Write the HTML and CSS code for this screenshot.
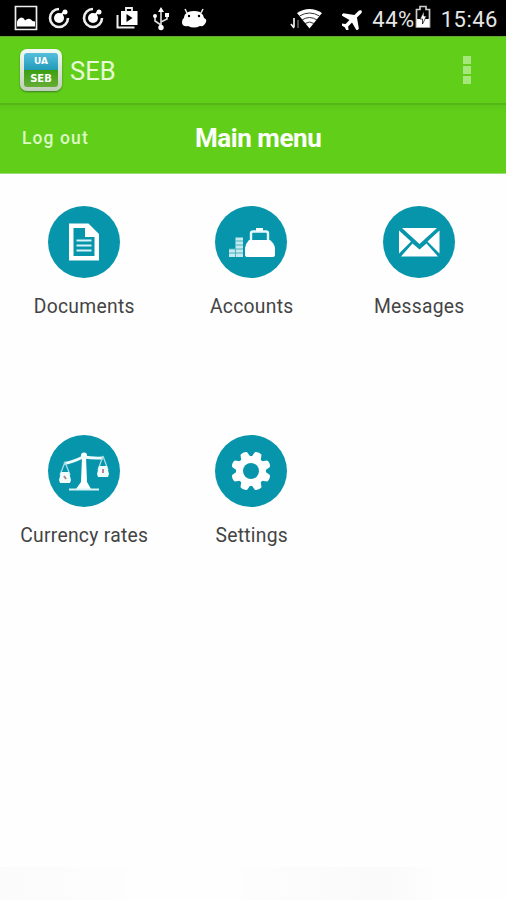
FILE: index.html
```html
<!DOCTYPE html>
<html lang="en">
<head>
<meta charset="utf-8">
<meta name="viewport" content="width=device-width">
<title>SEB</title>
<link rel="stylesheet" href="styles.css">
</head>
<body>
<header class="status">
  <div class="notifications">
    <svg width="24" height="26" viewBox="0 0 24 26"><path d="M1.500 1.500h21v23h-21z" fill="none" stroke="#eee" stroke-width="1.7"/><path d="M3 21.500v-5q1-3 4-4 3 0 4 3 3-3 6-1 1 2 4 2v5z" fill="#fff"/></svg>
    <svg class="swirl" width="22" height="22" viewBox="0 0 22 22"><path d="M11 2A9 9 0 1 0 20 11" fill="none" stroke="#eee" stroke-width="2.6"/><circle cx="11" cy="11" r="5" fill="#fff"/><path d="M12 9l5-5" stroke="#fff" stroke-width="2"/><circle cx="17" cy="5" r="2.5" fill="#fff"/></svg>
    <svg class="swirl second" width="22" height="22" viewBox="0 0 22 22"><path d="M11 2A9 9 0 1 0 20 11" fill="none" stroke="#eee" stroke-width="2.6"/><circle cx="11" cy="11" r="5" fill="#fff"/><path d="M12 9l5-5" stroke="#fff" stroke-width="2"/><circle cx="17" cy="5" r="2.5" fill="#fff"/></svg>
    <svg class="store" width="23" height="24" viewBox="0 0 23 24"><path d="M1.500 9v12.500h17" fill="none" stroke="#eee" stroke-width="2"/><path d="M5 5h16.500v14H5z" fill="#fff"/><path d="M10 6V2h6v4" fill="none" stroke="#eee" stroke-width="1.8"/><path d="M10.500 8v8l6-4z" fill="#000"/></svg>
    <svg class="usb" width="18" height="24" viewBox="0 0 18 24"><path d="M9 22V4M9 18l-6-4V8M9 15l6-3V8" fill="none" stroke="#ddd" stroke-width="1.6"/><path d="M9 0l3 5H6zM13 6h4v4h-4z" fill="#fff"/><circle cx="3" cy="9" r="2" fill="#fff"/><circle cx="9" cy="20.500" r="2.700" fill="#fff"/></svg>
    <svg class="droid" width="26" height="22" viewBox="0 0 26 22"><path d="M6 5L4 1M20 5l2-4" stroke="#eee" stroke-width="1.5"/><path d="M7 4q6-2 12 0 3 2 4 6 3 1 2 4-2 5-6 4-6 3-12 0-5 1-6-3 0-4 2-5 0-4 4-6z" fill="#fff"/><circle cx="8" cy="8" r="1.200"/><circle cx="18" cy="8" r="1.200"/></svg>
  </div>
  <div class="system">
    <svg class="wifi" width="34" height="22" viewBox="0 0 34 22"><path d="M7 5Q19.500-3 32 5L19.500 20.500z" fill="#fff"/><path d="M9.500 8q10-6 20 0M12 12q7.500-5 15 0M15 15.500q4.500-3 9 0" fill="none" stroke="#333" stroke-width="1"/><path d="M4 10v9M1 16l3 4" stroke="#eee" stroke-width="1.700" fill="none"/><path d="M8 12v8" stroke="#666" stroke-width="1.500"/></svg>
    <svg class="plane" width="22" height="22" viewBox="0 0 22 22"><g transform="translate(10.500 11.500) rotate(45)"><path d="M-1.800-11q1.800-3.500 3.600 0V-4.500L11 2v3L1.800 2.500V8L5 10.500V12.500L0 11l-5 1.500v-2L-1.800 8V2.500L-11 5V2l9.200-6.500z" fill="#fff"/></g></svg>
    <span class="percent">44%</span>
    <svg class="battery" width="16" height="24" viewBox="0 0 16 24"><path d="M1.500 22V4.500H5v-3h6v3h3.500V22z" fill="none" stroke="#ccc" stroke-width="1.700"/><path d="M2 14h12v8H2z" fill="#fff"/><path d="M9 6l-4 8h2.500v5l4-8H9z" fill="#fff" stroke="#000" stroke-width=".7"/></svg>
    <time>15:46</time>
  </div>
</header>
<div class="appbar">
  <div class="logo"><div class="logo-face"><span>UA</span><span>SEB</span></div></div>
  <span class="app-name">SEB</span>
  <div class="overflow"><i></i><i></i><i></i></div>
</div>
<nav class="titlebar">
  <a class="logout">Log out</a>
  <h1>Main menu</h1>
</nav>
<main class="menu">
  <a class="item">
    <svg class="disc" viewBox="0 0 72 72"><path fill-rule="evenodd" fill="#fff" d="M21 17.500h19.500L51 28v26.500H21zM25.500 22v28h21V31H37V22z"/><path d="M28.500 34.500h15M28.500 39.500h15M28.500 44.500h15" stroke="#d8f4f8" stroke-width="2.200"/></svg>
    <span>Documents</span>
  </a>
  <a class="item">
    <svg class="disc" viewBox="0 0 72 72"><path d="M36 36V27.500q0-2 2-2h13q2 0 2 2V36" fill="none" stroke="#e4f8fa" stroke-width="2.400"/><path d="M41 22h7v3h-7zM34 34h21q4 3 5 8v7q0 2-3 2H33q-3 0-3-2v-7q1-5 4-8z" fill="#fff"/><path d="M20.500 31.500h7.500v19.500h-7.500zM14 43h7v8h-7z" fill="#c4e9ee"/><path d="M20.500 35h7.500M20.500 39h7.500M14 43h14M14 47h14M20.500 43v8" stroke="#4cb0c0" stroke-width="1"/></svg>
    <span>Accounts</span>
  </a>
  <a class="item">
    <svg class="disc" viewBox="0 0 72 72"><path d="M19 22h35L36.500 38zM16 24.500l12 11-12 12zM56.500 24.500l-12 11 12 12zM29.500 37.500l7 6 7-6L55 50.500H18z" fill="#fff"/></svg>
    <span>Messages</span>
  </a>
  <a class="item">
    <svg class="disc" viewBox="0 0 72 72"><path d="M34 22h4l1 25 4 7H28l5-7z" fill="#fff"/><circle cx="36" cy="20.500" r="3" fill="#fff"/><path d="M16 28.500Q25 27 35 22q10 1.500 20 1" fill="none" stroke="#eefbfc" stroke-width="2.800"/><path d="M21 54.500h30" stroke="#d8f3f6" stroke-width="2"/><path d="M17 27l-5 13M17 27l5 13M55 21l-5 14M55 21l5 14" stroke="#a6dbe4" stroke-width="1.300"/><path d="M13 37h8l2 8-1 3H12l-1-3zM51 31h8l2 8-1 3H50l-1-3z" fill="#f0fbfc"/><path d="M16 41l2 3M55 34v4" stroke="#be858e" stroke-width="2"/></svg>
    <span>Currency rates</span>
  </a>
  <a class="item">
    <svg class="disc" viewBox="0 0 72 72"><defs><path id="tooth" d="M30.500 25L32.500 17q3.500-2 7 0l2 8z"/></defs><g fill="#fff"><circle cx="36" cy="36" r="15"/><use href="#tooth" transform="rotate(22.5 36 36)"/><use href="#tooth" transform="rotate(67.5 36 36)"/><use href="#tooth" transform="rotate(112.5 36 36)"/><use href="#tooth" transform="rotate(157.5 36 36)"/><use href="#tooth" transform="rotate(202.5 36 36)"/><use href="#tooth" transform="rotate(247.5 36 36)"/><use href="#tooth" transform="rotate(292.5 36 36)"/><use href="#tooth" transform="rotate(337.5 36 36)"/></g><circle cx="36" cy="36" r="8" fill="#0795ac"/></svg>
    <span>Settings</span>
  </a>
</main>
<footer class="base"><i></i><i></i></footer>
</body>
</html>
```
FILE: styles.css
```css
* { box-sizing: border-box; }
body {
  margin: 0;
  height: 900px;
  display: flex;
  flex-direction: column;
  overflow: hidden;
  background: #fefefe;
  color: #444;
  font-family: Roboto, "Liberation Sans", sans-serif;
}
svg { display: block; flex: none; }
.status {
  height: 36px;
  padding: 5px 8px 0 14px;
  display: flex;
  justify-content: space-between;
  background: #000;
  color: #e6e6e6;
  font-size: 22px;
}
.notifications, .system { display: flex; align-items: flex-start; }
.swirl { margin: 2px 0 0 10px; }
.swirl.second { margin-left: 12px; }
.store { margin: 1px 0 0 12px; }
.usb { margin: 2px 0 0 13px; }
.droid { margin: 3px 0 0 11px; }
.wifi { margin-top: 3px; }
.plane { margin: 3px 0 0 18px; }
.percent { margin: 1px 0 0 8px; line-height: 28px; letter-spacing: .5px; }
.battery { margin: 0 10px 0 0; }
time { margin-top: 1px; line-height: 28px; letter-spacing: .5px; }

.appbar {
  height: 69px;
  display: flex;
  align-items: center;
  padding: 0 35px 0 20px;
  background: #61cf19;
  border-top: 1px solid #65a934;
  border-bottom: 2px solid #55b715;
}
.logo {
  width: 42px;
  height: 42px;
  padding: 4px;
  border-radius: 7px;
  background: linear-gradient(#f5f9f6, #c0cfb9);
  box-shadow: 0 1px 2px #397a22;
}
.logo-face {
  height: 34px;
  border-radius: 3px;
  display: grid;
  grid-template-rows: 17px 17px;
  place-items: center;
  background: linear-gradient(#55bfdc, #219ab9 50%, #3c9e12 50%, #66ad35);
  color: #fff;
  font: bold 9px/17px "DejaVu Sans", sans-serif;
}
.logo-face span:last-child { font-size: 10px; }
.app-name {
  margin: 2px 0 0 8px;
  color: #e8fad7;
  font-size: 25.5px;
  line-height: 34px;
}
.overflow { margin-left: auto; display: grid; gap: 2px; }
.overflow i { width: 8px; height: 8px; background: #a6e77b; }

.titlebar {
  height: 69px;
  display: grid;
  grid-template-columns: 195px 1fr;
  align-items: center;
  background: linear-gradient(#5dc718, #61cf19 8px);
  border-bottom: 1px solid #9bdc70;
  color: #fcfff8;
}
.logout {
  padding: 0 0 3px 22px;
  color: #dcf8c7;
  font-size: 17.5px;
  font-weight: 500;
  letter-spacing: 1.1px;
}
h1 {
  margin: 0;
  font-size: 26px;
  line-height: 32px;
  letter-spacing: -.45px;
  padding-bottom: 2px;
}

.menu {
  flex: 1;
  display: grid;
  grid-template-columns: repeat(3, 167.5px);
  grid-auto-rows: 229px;
  padding-top: 32px;
}
.item { display: flex; flex-direction: column; align-items: center; }
.disc {
  width: 72px;
  height: 72px;
  border-radius: 50%;
  background: #0795ac;
}
.item span {
  margin: 16px 0 0 1px;
  font-size: 19.3px;
  line-height: 26px;
  letter-spacing: .28px;
  white-space: nowrap;
}
.base { height: 33px; display: flex; gap: 116px; }
.base i { width: 126px; background: linear-gradient(90deg, #fbfbfb, #fdfdfd); }
.base i + i { width: 190px; background: linear-gradient(90deg, #fdfdfd, #fafafa 75%, #fdfdfd); }
```
